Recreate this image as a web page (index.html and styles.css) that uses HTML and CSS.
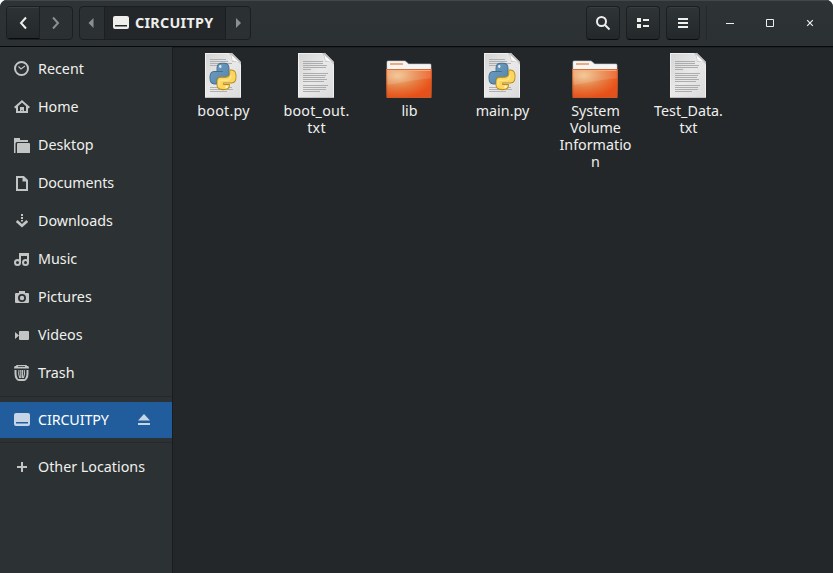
FILE: index.html
```html
<!DOCTYPE html>
<html lang="en">
<head>
<meta charset="utf-8">
<title>CIRCUITPY</title>
<link rel="stylesheet" href="styles.css">
</head>
<body>
<svg class="defs" width="0" height="0" aria-hidden="true">
  <defs>
    <linearGradient id="paper" x1="0" y1="0" x2="1" y2="1"><stop offset="0" stop-color="#d4d4d4"/><stop offset=".5" stop-color="#e9e9e9"/><stop offset="1" stop-color="#dadada"/></linearGradient>
    <linearGradient id="fold" x1="0" y1="1" x2="1" y2="0"><stop offset="0" stop-color="#aaa"/><stop offset=".4" stop-color="#fff"/><stop offset="1" stop-color="#ccc"/></linearGradient>
    <radialGradient id="orange" cx=".25" cy=".25" r=".9"><stop offset="0" stop-color="#f4cc96"/><stop offset=".45" stop-color="#eb8a4d"/><stop offset=".85" stop-color="#f05218"/><stop offset="1" stop-color="#e9531f"/></radialGradient>
    <linearGradient id="shade" x1="0" y1="0" x2="0" y2="1"><stop offset="0" stop-color="#c8602a" stop-opacity="0"/><stop offset="1" stop-color="#d94a16" stop-opacity=".4"/></linearGradient>
    <linearGradient id="blue" x1="0" y1="0" x2="1" y2="1"><stop offset="0" stop-color="#6fa0c4"/><stop offset="1" stop-color="#5484a9"/></linearGradient>
    <linearGradient id="yellow" x1="0" y1="0" x2="1" y2="1"><stop offset="0" stop-color="#ffd75a"/><stop offset="1" stop-color="#f8d764"/></linearGradient>
  </defs>
  <symbol id="page" viewBox="0 0 48 48">
    <path d="M6 1h27l9 9v36H6z" fill="url(#paper)"/>
    <path d="M6.500 1.500h26.300l8.700 8.700v35.300h-35z" fill="none" stroke="#f0f0f0"/>
    <path d="M6 45.500h36" stroke="#bdbdbd"/>
    <path d="M30 1h3l9 9v3c-1-3-4-4-9-3 0-4-1-7-3-9z" fill="#999" opacity=".55"/>
    <path d="M31 1.500c2 2 2.500 5 2 8 3-.5 6 0 8 1.500z" fill="url(#fold)"/>
  </symbol>
  <symbol id="text" viewBox="0 0 48 48">
    <use href="#page"/>
    <path d="M11 9.500h20M11 11.500h20M11 13.500h24M11 15.500h23M11 17.500h8M11 21.500h25M11 23.500h23M11 25.500h22M11 27.500h24M11 29.500h21M11 33.500h25M11 35.500h23M11 37.500h23M11 39.500h17" stroke="#adadad"/>
  </symbol>
  <symbol id="python" viewBox="0 0 48 48">
    <use href="#page"/>
    <path d="M11 7.500h16M11 9.500h18M11 11.500h22M11 13.500h8M11 35.500h22M11 37.500h23M11 39.500h17" stroke="#b0b0b0"/>
    <g transform="translate(4.700 -.5) scale(.83 1.030)">
      <path d="M16 19v-3c0-3.200 2.500-4.500 6-4.500h2.500c3.500 0 6 1.200 6 4.500v5.500c0 3-1.500 4-4 4H20c-3 0-4.500 1.500-4.500 4.500v1.500H13c-4 0-5.500-2.700-5.500-6s1.500-6 5-6H23" fill="url(#blue)" stroke="#446d8f"/>
      <path d="M31.500 18h2c4 0 5.500 3 5.500 6.500 0 3.700-2 6-5.500 6H24v1.500h7v1c0 3-3 4-7.500 4S16 36 16 32.500v-3c0-3 1.500-4.500 4.500-4.500h6c3 0 5-1.500 5-4.500z" fill="url(#yellow)" stroke="#bb8919"/>
      <path d="M18.500 33v-3c0-1.500.5-2 2-2h7c3 0 5-2 5.500-5" fill="none" stroke="#fff1a6" stroke-width="1.500" opacity=".6"/>
      <circle cx="20" cy="14.500" r="1.400" fill="#e2f0f8"/><circle cx="27.500" cy="34.300" r="1.400" fill="#fff8d6"/>
    </g>
  </symbol>
  <symbol id="folder" viewBox="0 0 48 48">
    <path d="M2 17.500V10q0-1 1-1h16.500q1 0 2 1l2 2H45q1 0 1 1v5H2z" fill="#f5f5f5" stroke="#c9c9c9" stroke-width=".6"/>
    <rect x="5" y="11" width="13" height="2" fill="#f3a878"/>
    <path d="M1 17h46l-.7 28.500q0 .5-.6.500H2.300q-.6 0-.6-.5z" fill="url(#orange)"/>
    <path d="M1 17h46l-.7 28.500q0 .5-.6.500H2.300q-.6 0-.6-.5z" fill="url(#shade)"/>
    <path d="M1.500 17.500h45v9C32 27 15 31 2 33z" fill="#fff" opacity=".13"/>
    <path d="M1.500 17.500h45l-.6 28H2.200z" fill="none" stroke="#c95b29" stroke-width=".8"/>
    <path d="M2.500 18.400h43" stroke="#f6b17e"/>
  </symbol>
  <symbol id="drive" viewBox="0 0 16 16"><path fill-rule="evenodd" d="M2 1h12q2 0 2 2v9q0 2-2 2H2q-2 0-2-2V3q0-2 2-2zm0 9v1.500h12V10z"/></symbol>
</svg>

<div class="window">
  <header class="bar">
    <div class="group nav">
      <button class="seg raised"><svg width="16" height="16" viewBox="0 0 16 16"><path class="line" d="M11 2.500 6 8l5 5.500"/></svg></button>
      <button class="seg dim"><svg width="16" height="16" viewBox="0 0 16 16"><path class="line" d="M5 2.500 10 8l-5 5.500"/></svg></button>
    </div>
    <div class="group path">
      <button class="seg dim"><svg width="16" height="16"><path d="M9.500 3v10L4.500 8z"/></svg></button>
      <button class="seg here"><svg width="16" height="16"><use href="#drive"/></svg><b>CIRCUITPY</b></button>
      <button class="seg dim"><svg width="16" height="16"><path d="M6 3v10l5-5z"/></svg></button>
    </div>
    <div class="tools">
      <button class="tool"><svg width="16" height="16"><circle class="line" cx="6.500" cy="6.500" r="4.500"/><path class="line" d="M10 10l4.500 4.500"/></svg></button>
      <button class="tool"><svg width="16" height="16"><path d="M2 3h4v4H2zM2 9h4v4H2zM8 4h6v2H8zM8 10h6v2H8z"/></svg></button>
      <button class="tool"><svg width="16" height="16"><path d="M3 3h10v2H3zM3 7h10v2H3zM3 11h10v2H3z"/></svg></button>
    </div>
    <div class="controls">
      <svg width="16" height="16"><path d="M4 8h8v1H4z"/></svg>
      <svg width="16" height="16"><path fill="none" stroke="#eeeeec" d="M4.500 4.500h7v7h-7z"/></svg>
      <svg width="16" height="16"><path fill="none" stroke="#eeeeec" stroke-width="1.200" d="M5.200 5.200l5.600 5.600M10.800 5.200l-5.600 5.600"/></svg>
    </div>
  </header>
  <div class="body">
    <nav class="side">
      <a class="row"><svg width="16" height="16"><circle class="line" cx="7.500" cy="7.500" r="6.500"/><path class="line thin" d="M4.500 5.500 7 8l4-3"/></svg><span>Recent</span></a>
      <a class="row"><svg width="16" height="16"><path class="line" d="M.7 8.800 8 2.300l7.300 6.500M3 7v6h10V7"/><path d="M6 8h4v6H8.500v-3h-1v3H6z"/></svg><span>Home</span></a>
      <a class="row"><svg width="16" height="16"><path d="M0 1h6v2h8v2H3q-1.500 0-1.500 1.500V16H0zM4 6h11q1 0 1 1v9H3V7q0-1 1-1z"/></svg><span>Desktop</span></a>
      <a class="row"><svg width="16" height="16"><path class="line" d="M3 2h6.500L13 5.500V15H3z"/><path d="M8.500 1.500 13.500 6.500h-5z"/></svg><span class="tight">Documents</span></a>
      <a class="row"><svg width="16" height="16"><path d="M7 1h2v2H7zM7 4h2v2H7zM7 7h2v1.500H7z"/><path class="line wide" d="M2.700 8 8 12.800 13.300 8"/></svg><span>Downloads</span></a>
      <a class="row"><svg width="16" height="16"><circle class="line" cx="3.500" cy="11.500" r="2.500"/><circle class="line" cx="11.500" cy="11.500" r="2.500"/><path class="line" d="M6 12V3h8v9M6 4h8"/></svg><span>Music</span></a>
      <a class="row"><svg width="16" height="16"><path fill-rule="evenodd" d="M5 2h6v2h3q1 0 1 1v8q0 1-1 1H2q-1 0-1-1V5q0-1 1-1h3zM8 5a4 4 0 1 0 0 8 4 4 0 0 0 0-8z"/><circle cx="8" cy="9" r="2.200"/></svg><span>Pictures</span></a>
      <a class="row"><svg width="16" height="16"><path d="M6 4h8q1 0 1 1v7q0 1-1 1H6q-1 0-1-1V5q0-1 1-1zM1 5l4 3.500L1 12z"/></svg><span>Videos</span></a>
      <a class="row"><svg width="16" height="16"><path fill-rule="evenodd" d="M3 0h9q1 0 1 1h1q1 0 1 2.500H0Q0 1 1 1h1q0-1 1-1zm1 1.200v.8h7v-.8z"/><path class="line" d="M1.500 5v3.500q0 3 1.300 5 .6 1.500 2 1.500h5.400q1.400 0 2-1.500 1.300-2 1.300-5V5"/><path class="line thin" d="M5 5q-1 4 .8 8M6.800 5v8M8.400 5v8M10.200 5q1 4-.8 8"/></svg><span>Trash</span></a>
      <hr>
      <a class="row active"><svg width="16" height="16"><use href="#drive"/></svg><span class="tight">CIRCUITPY</span><svg class="eject" width="16" height="16"><path d="M8 2l6 6.500H2zM2 11h12v2H2z"/></svg></a>
      <hr>
      <a class="row"><svg width="16" height="16"><path d="M7 3h2v4h4v2H9v4H7V9H3V7h4z"/></svg><span>Other Locations</span></a>
    </nav>
    <main class="files">
      <figure><svg width="48" height="48"><use href="#python"/></svg><figcaption class="loose">boot.py</figcaption></figure>
      <figure><svg width="48" height="48"><use href="#text"/></svg><figcaption class="loose">boot_out.<br>txt</figcaption></figure>
      <figure><svg width="48" height="48"><use href="#folder"/></svg><figcaption>lib</figcaption></figure>
      <figure><svg width="48" height="48"><use href="#python"/></svg><figcaption>main.py</figcaption></figure>
      <figure><svg width="48" height="48"><use href="#folder"/></svg><figcaption>System<br>Volume<br>Informatio<br>n</figcaption></figure>
      <figure><svg width="48" height="48"><use href="#text"/></svg><figcaption>Test_Data.<br>txt</figcaption></figure>
    </main>
  </div>
</div>
</body>
</html>
```

FILE: styles.css
```css
* { box-sizing: border-box; }
body { margin: 0; background: #fff; color: #f0f0ee; font: 14.3px/17px "Noto Sans", "Open Sans", sans-serif; }
.defs { position: absolute; }
svg { display: block; flex: none; fill: currentColor; }
.line { fill: none; stroke: currentColor; stroke-width: 2; }
.thin { stroke-width: 1.1; }
.wide { stroke-width: 2.6; }
.window { width: 833px; height: 573px; display: flex; flex-direction: column; border-radius: 7px 7px 0 0; overflow: hidden; background: #23272a; }
.bar { height: 47px; flex: none; display: flex; align-items: flex-start; padding: 6px 15px 0 6px; background: linear-gradient(#2e3436, #2b3033); border-bottom: 1px solid #08090a; box-shadow: inset 0 1px #42484a; color: #eeeeec; }
button { font: inherit; color: inherit; margin: 0; padding: 0; border: 0; background: none; display: flex; align-items: center; justify-content: center; }
.group { display: flex; height: 34px; border: 1px solid #1b1f21; border-radius: 4px; overflow: hidden; background: #2b3033; }
.seg + .seg { border-left: 1px solid #1b1f21; }
.nav { width: 67px; margin-right: 6px; }
.nav .seg { flex: 1; }
.raised { background: linear-gradient(#2d3234, #23282a); box-shadow: inset 0 1px #3a4042, inset 0 -1px #090b0b; }
.dim { color: #8b8f8f; }
.path { width: 172px; }
.path .dim { width: 24px; }
.path .dim:last-child { width: 25px; }
.path .here { flex: 1; justify-content: flex-start; gap: 6px; padding-left: 8px; background: #23272a; }
.path b { letter-spacing: .3px; padding-bottom: 2px; }
.tools { display: flex; gap: 6px; margin-left: auto; padding-right: 6px; border-right: 1px solid #25292b; }
.tool { width: 34px; height: 34px; border: 1px solid #1b1f21; border-bottom-color: #0b0d0d; border-radius: 4px; background: linear-gradient(#2f3537, #23282a); box-shadow: inset 0 1px #383e40; }
.controls { display: flex; gap: 24px; padding: 9px 0 0 15px; }
.body { flex: 1; display: flex; min-height: 0; }
.side { width: 173px; padding-top: 3px; background: #2c3133; border-right: 1px solid #1a1d1f; }
.row { height: 38px; display: flex; align-items: center; gap: 8px; padding: 0 20px 0 14px; white-space: nowrap; }
.row span { padding-bottom: 2px; }
.row svg { color: #c3c5c5; }
.row.active { height: 36px; background: #215d9c; color: #fff; }
.row.active svg { color: #c5d5e5; }
.eject { margin-left: auto; }
.tight { letter-spacing: -.12px; }
.loose { letter-spacing: .22px; }
hr { height: 1px; border: 0; margin: 4px 0 5px; background: #25292b; }
.files { flex: 1; display: flex; align-items: flex-start; padding: 5px 0 0 4px; box-shadow: inset 0 1px #1c1f21; }
figure { margin: 0; width: 93px; display: flex; flex-direction: column; align-items: center; gap: 2px; }
figure svg { margin-right: 1px; }
figcaption { text-align: center; white-space: nowrap; }
```
